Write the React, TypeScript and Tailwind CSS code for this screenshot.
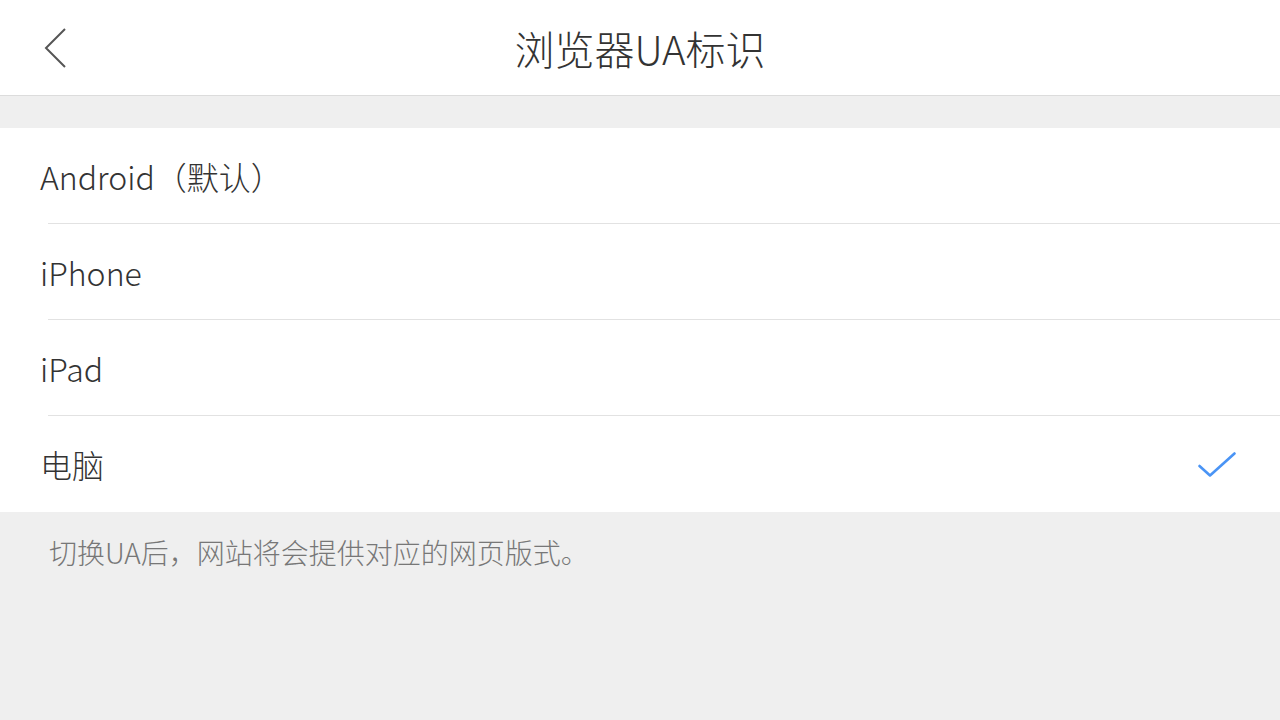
const FONT = "font-['Noto_Sans_CJK_SC','Noto_Sans',sans-serif]"

const options = [
  { id: 'android', label: 'Android（默认）' },
  { id: 'iphone', label: 'iPhone' },
  { id: 'ipad', label: 'iPad' },
  { id: 'pc', label: '电脑' },
]

function BackIcon() {
  return (
    <svg className="h-[40px] w-[24px]" viewBox="0 0 24 40" fill="none" stroke="#555" strokeWidth={2}>
      <path d="M21 1 L2 20 L21 39" />
    </svg>
  )
}

function CheckIcon() {
  return (
    <svg className="h-[28px] w-[38px]" viewBox="0 0 38 28" fill="none" stroke="#4a94f5" strokeWidth={2.6} strokeLinecap="round" strokeLinejoin="round">
      <path d="M1.5 16 L12 25.5 L36.5 3.5" />
    </svg>
  )
}

export default function App() {
  const selected = 'pc'

  return (
    <div className={`flex h-[720px] w-[1280px] flex-col bg-[#efefef] ${FONT}`}>
      <header className="relative flex h-[96px] shrink-0 items-center justify-center border-b border-[#dcdcdc] bg-white">
        <button type="button" className="absolute left-[44px] top-[28px]" aria-label="返回">
          <BackIcon />
        </button>
        <h1 className="text-[40px] font-light leading-none text-[#333]">浏览器UA标识</h1>
      </header>

      <ul className="mt-[32px] bg-white">
        {options.map((option, index) => (
          <li key={option.id} className="relative flex h-[96px] items-center pl-[40px] pr-[44px]">
            <span className="flex-1 text-[32px] font-light text-[#333]">{option.label}</span>
            {option.id === selected && <CheckIcon />}
            {index < options.length - 1 && (
              <span className="absolute bottom-0 left-[48px] right-0 h-px bg-[#e2e2e2]" />
            )}
          </li>
        ))}
      </ul>

      <p className="pl-[49px] pt-[22px] text-[28px] font-light leading-[36px] text-[#777]">
        切换UA后，网站将会提供对应的网页版式。
      </p>
    </div>
  )
}
